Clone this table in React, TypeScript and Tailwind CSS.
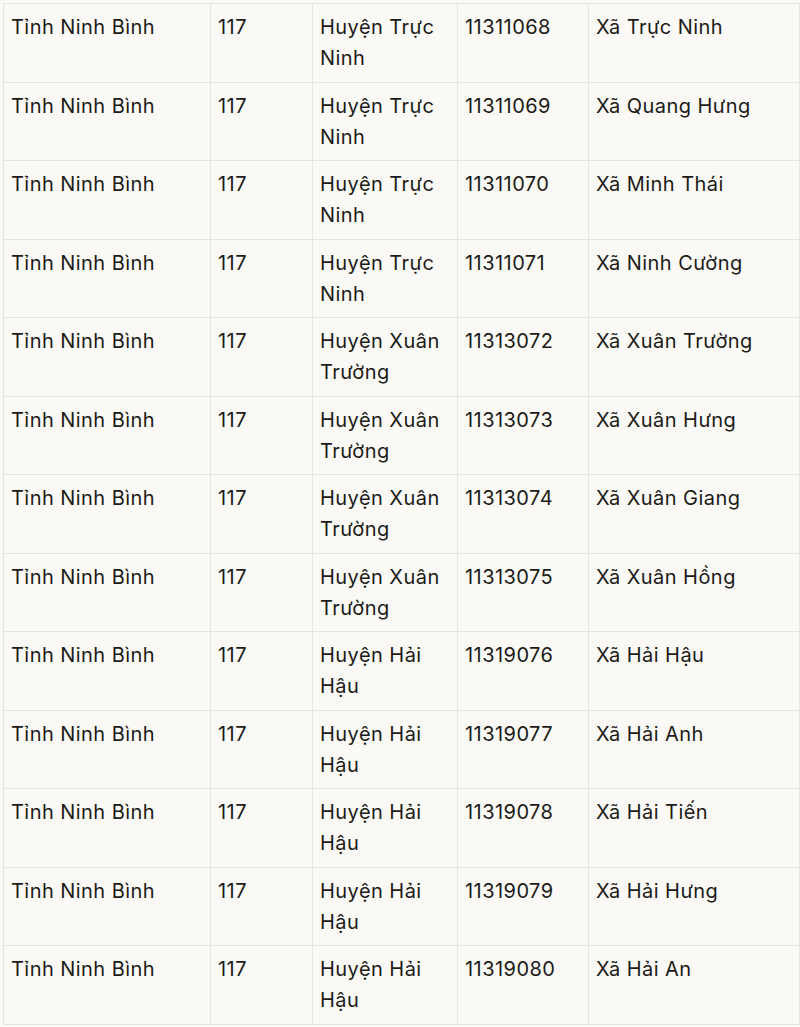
const rows: [string, string, string][] = [
  ["Huyện Trực Ninh", "11311068", "Xã Trực Ninh"],
  ["Huyện Trực Ninh", "11311069", "Xã Quang Hưng"],
  ["Huyện Trực Ninh", "11311070", "Xã Minh Thái"],
  ["Huyện Trực Ninh", "11311071", "Xã Ninh Cường"],
  ["Huyện Xuân Trường", "11313072", "Xã Xuân Trường"],
  ["Huyện Xuân Trường", "11313073", "Xã Xuân Hưng"],
  ["Huyện Xuân Trường", "11313074", "Xã Xuân Giang"],
  ["Huyện Xuân Trường", "11313075", "Xã Xuân Hồng"],
  ["Huyện Hải Hậu", "11319076", "Xã Hải Hậu"],
  ["Huyện Hải Hậu", "11319077", "Xã Hải Anh"],
  ["Huyện Hải Hậu", "11319078", "Xã Hải Tiến"],
  ["Huyện Hải Hậu", "11319079", "Xã Hải Hưng"],
  ["Huyện Hải Hậu", "11319080", "Xã Hải An"],
];

const cell =
  "border border-[#e6e4de] align-top pl-[7px] pr-1 pt-[8px] text-[20px] leading-[31px] tracking-[0.45px]";

export default function App() {
  return (
    <div
      className="min-h-screen bg-[#faf9f5] text-[#1c1b18] pl-[3px] pt-[3px]"
      style={{ fontFamily: "Inter, 'Noto Sans', sans-serif" }}
    >
      <table className="border-collapse table-fixed w-[796px]">
        <colgroup>
          <col className="w-[207px]" />
          <col className="w-[102px]" />
          <col className="w-[145px]" />
          <col className="w-[131px]" />
          <col className="w-[211px]" />
        </colgroup>
        <tbody>
          {rows.map(([district, code, commune]) => (
            <tr key={code} className="h-[78.5px]">
              <td className={cell}>Tỉnh Ninh Bình</td>
              <td className={cell}>117</td>
              <td className={cell}>{district}</td>
              <td className={cell}>{code}</td>
              <td className={cell}>{commune}</td>
            </tr>
          ))}
        </tbody>
      </table>
    </div>
  );
}
